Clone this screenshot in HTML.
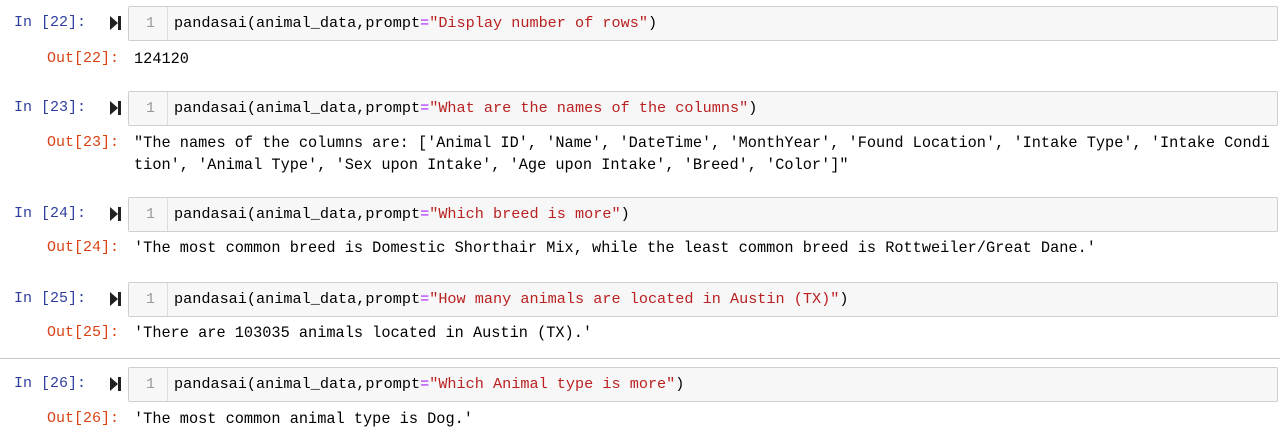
<!DOCTYPE html>
<html><head><style>
body{margin:0;width:1280px;height:439px;background:#fff;position:relative;overflow:hidden;font-family:"Liberation Mono",monospace;font-size:15px;color:#000}
.a{position:absolute;white-space:pre;line-height:22px}
.in{color:#303F9F;left:14px}
.out{color:#D84315;left:47px}
.run{position:absolute;left:110px;width:11px;height:14px}
.box{position:absolute;left:128px;width:1148px;height:33px;background:#f7f7f7;border:1px solid #cfcfcf;border-radius:2px}
.gut{position:absolute;left:0;top:0;width:38px;height:33px;border-right:1px solid #ddd;background:#f7f7f7;color:#999;text-align:right;line-height:33px}
.gut span{padding-right:12px}
.code{position:absolute;left:45px;top:0;line-height:33px;white-space:pre;font-size:15.2px}
.s{color:#BA2121}.o{color:#AA22FF}
.res{left:134px;font-size:15.27px;top:0}
</style></head><body>

<div class="a in" style="top:12px">In [22]:</div>
<svg class="run" style="top:16px" viewBox="0 0 11 14"><path d="M0 0L8 7L0 14Z" fill="#222"/><rect x="8" y="0" width="3" height="14" fill="#222"/></svg>
<div class="box" style="top:6px"><div class="gut"><span>1</span></div><div class="code">pandasai(animal_data,prompt<span class="o">=</span><span class="s">"Display number of rows"</span>)</div></div>
<div class="a out" style="top:48px">Out[22]:</div>
<div class="a res" style="top:48px">124120</div>

<div class="a in" style="top:97px">In [23]:</div>
<svg class="run" style="top:101px" viewBox="0 0 11 14"><path d="M0 0L8 7L0 14Z" fill="#222"/><rect x="8" y="0" width="3" height="14" fill="#222"/></svg>
<div class="box" style="top:91px"><div class="gut"><span>1</span></div><div class="code">pandasai(animal_data,prompt<span class="o">=</span><span class="s">"What are the names of the columns"</span>)</div></div>
<div class="a out" style="top:132px">Out[23]:</div>
<div class="a res" style="top:132px">"The names of the columns are: ['Animal ID', 'Name', 'DateTime', 'MonthYear', 'Found Location', 'Intake Type', 'Intake Condi
tion', 'Animal Type', 'Sex upon Intake', 'Age upon Intake', 'Breed', 'Color']"</div>

<div class="a in" style="top:203px">In [24]:</div>
<svg class="run" style="top:207px" viewBox="0 0 11 14"><path d="M0 0L8 7L0 14Z" fill="#222"/><rect x="8" y="0" width="3" height="14" fill="#222"/></svg>
<div class="box" style="top:197px"><div class="gut"><span>1</span></div><div class="code">pandasai(animal_data,prompt<span class="o">=</span><span class="s">"Which breed is more"</span>)</div></div>
<div class="a out" style="top:237px">Out[24]:</div>
<div class="a res" style="top:237px">'The most common breed is Domestic Shorthair Mix, while the least common breed is Rottweiler/Great Dane.'</div>

<div class="a in" style="top:288px">In [25]:</div>
<svg class="run" style="top:292px" viewBox="0 0 11 14"><path d="M0 0L8 7L0 14Z" fill="#222"/><rect x="8" y="0" width="3" height="14" fill="#222"/></svg>
<div class="box" style="top:282px"><div class="gut"><span>1</span></div><div class="code">pandasai(animal_data,prompt<span class="o">=</span><span class="s">"How many animals are located in Austin (TX)"</span>)</div></div>
<div class="a out" style="top:322px">Out[25]:</div>
<div class="a res" style="top:322px">'There are 103035 animals located in Austin (TX).'</div>

<div style="position:absolute;left:0;top:358px;width:1280px;height:1px;background:#c8c8c8"></div>

<div class="a in" style="top:373px">In [26]:</div>
<svg class="run" style="top:377px" viewBox="0 0 11 14"><path d="M0 0L8 7L0 14Z" fill="#222"/><rect x="8" y="0" width="3" height="14" fill="#222"/></svg>
<div class="box" style="top:367px"><div class="gut"><span>1</span></div><div class="code">pandasai(animal_data,prompt<span class="o">=</span><span class="s">"Which Animal type is more"</span>)</div></div>
<div class="a out" style="top:408px">Out[26]:</div>
<div class="a res" style="top:408px">'The most common animal type is Dog.'</div>

</body></html>
